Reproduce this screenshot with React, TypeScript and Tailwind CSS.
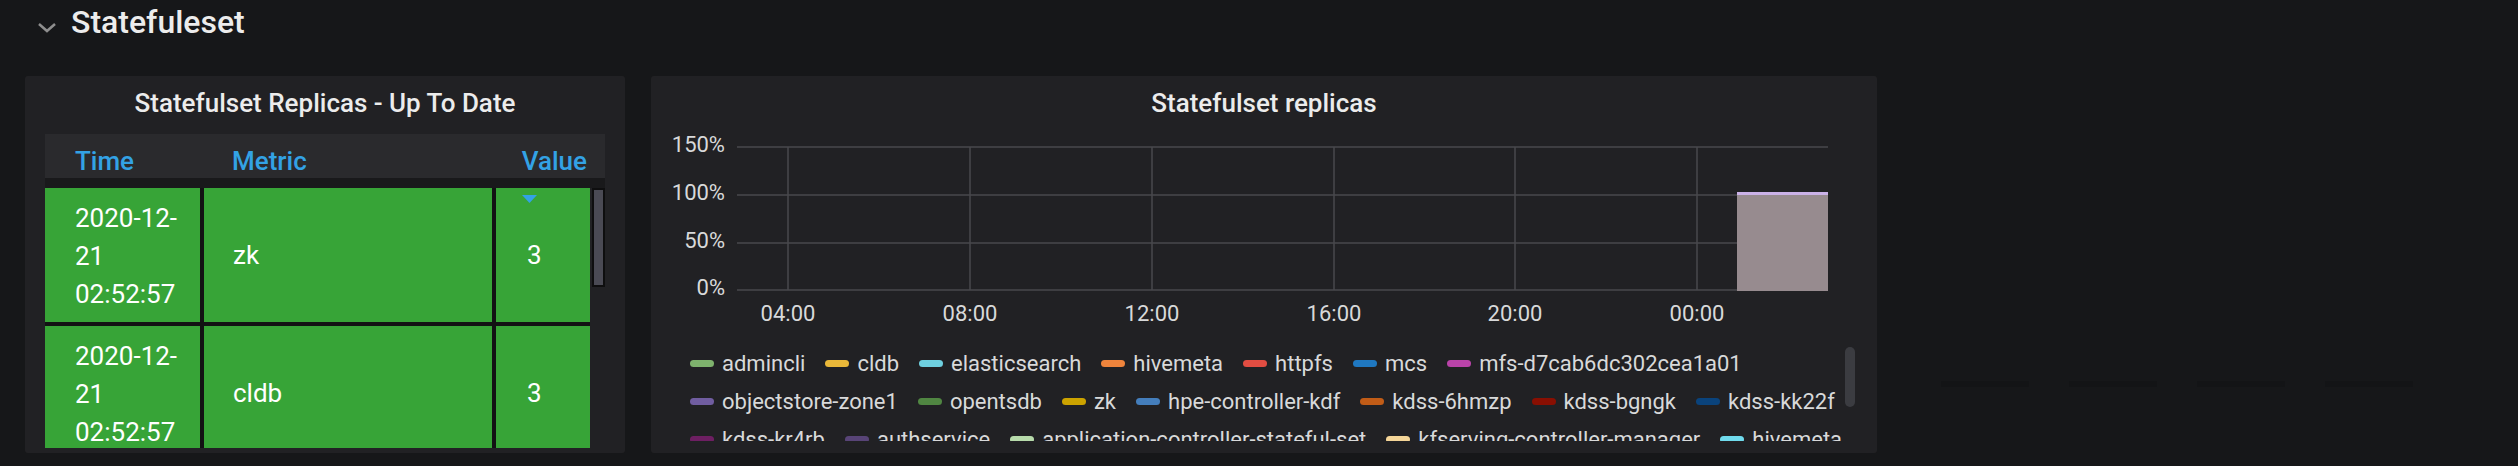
import React from "react";

const legendRows = [
  [
    { name: "admincli", color: "#7eb26d" },
    { name: "cldb", color: "#eab839" },
    { name: "elasticsearch", color: "#6ed0e0" },
    { name: "hivemeta", color: "#ef843c" },
    { name: "httpfs", color: "#e24d42" },
    { name: "mcs", color: "#1f78c1" },
    { name: "mfs-d7cab6dc302cea1a01", color: "#ba43a9" },
  ],
  [
    { name: "objectstore-zone1", color: "#705da0" },
    { name: "opentsdb", color: "#508642" },
    { name: "zk", color: "#cca300" },
    { name: "hpe-controller-kdf", color: "#447ebc" },
    { name: "kdss-6hmzp", color: "#c15c17" },
    { name: "kdss-bgngk", color: "#890f02" },
    { name: "kdss-kk22f", color: "#0a437c" },
  ],
  [
    { name: "kdss-kr4rb", color: "#6d1f62" },
    { name: "authservice", color: "#584477" },
    { name: "application-controller-stateful-set", color: "#b7dbab" },
    { name: "kfserving-controller-manager", color: "#f4d598" },
    { name: "hivemeta", color: "#70dbed" },
  ],
];

const rows = [
  { date: "2020-12-", day: "21", time: "02:52:57", metric: "zk", value: "3", sorted: true },
  { date: "2020-12-", day: "21", time: "02:52:57", metric: "cldb", value: "3", sorted: false },
];

const yTicks = [
  { label: "150%", y: 22 },
  { label: "100%", y: 70 },
  { label: "50%", y: 118 },
  { label: "0%", y: 165 },
];

const xTicks = [
  { label: "04:00", x: 137 },
  { label: "08:00", x: 319 },
  { label: "12:00", x: 501 },
  { label: "16:00", x: 683 },
  { label: "20:00", x: 864 },
  { label: "00:00", x: 1046 },
];

function ReplicaTable() {
  return (
    <div className="w-[600px] h-[377px] bg-[#212124] rounded-[3px] overflow-hidden flex flex-col">
      <div className="pt-[12px] text-center text-[26px] leading-[30px] font-medium text-[#ececec]">
        Statefulset Replicas - Up To Date
      </div>
      <div className="mt-[16px] mx-[20px] flex flex-col">
        {/* header */}
        <div className="flex h-[44px] bg-[#2a2a2d] pt-[12px] text-[26px] leading-[30px] font-medium text-[#33a2e5]">
          <div className="w-[159px] pl-[30px]">Time</div>
          <div className="w-[292px] pl-[28px]">Metric</div>
          <div className="w-[94px] text-right pr-[3px]">Value</div>
        </div>
        <div className="h-[10px] bg-[#19191b]" />
        {/* body */}
        <div className="flex h-[260px] overflow-hidden">
          <div className="w-[545px] flex flex-col gap-[4px] bg-[#121213]">
            {rows.map((r, i) => (
              <div key={i} className="flex gap-[4px] text-[26px] text-white shrink-0">
                <div className="w-[155px] bg-[#37a437] pt-[11px] pb-[9px] pl-[30px] leading-[38px]">
                  <div>{r.date}</div>
                  <div>{r.day}</div>
                  <div>{r.time}</div>
                </div>
                <div className="w-[288px] bg-[#37a437] flex items-center pl-[29px]">{r.metric}</div>
                <div className="relative w-[94px] bg-[#37a437] flex items-center pl-[31px]">
                  {r.sorted && (
                    <svg className="absolute top-[7px] left-[26px]" width="15" height="8" viewBox="0 0 15 8">
                      <polygon points="0,0 15,0 7.5,8" fill="#33a2e5" />
                    </svg>
                  )}
                  {r.value}
                </div>
              </div>
            ))}
          </div>
          <div className="ml-[2px] w-[13px]">
            <div className="h-[99px] bg-[#4a4a54] border-2 border-[#0e0e0f]" />
          </div>
        </div>
      </div>
    </div>
  );
}

function ReplicaGraph() {
  return (
    <div className="relative w-[1226px] h-[377px] bg-[#212124] rounded-[3px] overflow-hidden flex flex-col">
      <div className="pt-[12px] text-center text-[26px] leading-[30px] font-medium text-[#ececec]">
        Statefulset replicas
      </div>
      <svg className="mt-[7px] shrink-0" width="1226" height="205" viewBox="0 0 1226 205">
        {yTicks.map((t) => (
          <line key={t.label} x1="86" x2="1177" y1={t.y} y2={t.y} stroke="#48484c" strokeWidth="1.5" />
        ))}
        {xTicks.map((t) => (
          <line key={t.label} x1={t.x} x2={t.x} y1="22" y2="165" stroke="#48484c" strokeWidth="1.5" />
        ))}
        <rect x="1086" y="67" width="91" height="99" fill="#978b8f" />
        <rect x="1086" y="67" width="91" height="3" fill="#cbb2e8" />
        {yTicks.map((t) => (
          <text key={t.label} x="74" y={t.y + 5} textAnchor="end" fontFamily="Roboto, sans-serif" fontSize="22" fill="#d8d9da">
            {t.label}
          </text>
        ))}
        {xTicks.map((t) => (
          <text key={t.label} x={t.x} y="196" textAnchor="middle" fontFamily="Roboto, sans-serif" fontSize="22" fill="#d8d9da">
            {t.label}
          </text>
        ))}
      </svg>
      <div className="mt-[14px] pl-[39px] h-[97px] overflow-hidden flex flex-col text-[22px] text-[#d8d9da]">
        {legendRows.map((row, i) => (
          <div key={i} className="flex items-center h-[38px] shrink-0 gap-[20px] whitespace-nowrap">
            {row.map((item, j) => (
              <div key={j} className="flex items-center gap-[8px]">
                <span className="w-[24px] h-[7px] rounded-full" style={{ backgroundColor: item.color }} />
                <span>{item.name}</span>
              </div>
            ))}
          </div>
        ))}
      </div>
      <div className="absolute right-[22px] top-[271px] w-[10px] h-[60px] rounded-full bg-[#3b3c41]" />
    </div>
  );
}

export default function App() {
  return (
    <div className="w-[2518px] h-[466px] bg-[#161719] overflow-hidden font-['Roboto',sans-serif]">
      <div className="flex items-start pl-[37px] pt-[3px] h-[76px]">
        <svg className="mt-[19px]" width="20" height="11" viewBox="0 0 20 11">
          <polyline points="2,2 10,9 18,2" fill="none" stroke="#8e8e8e" strokeWidth="2.5" />
        </svg>
        <h1 className="ml-[14px] text-[32px] leading-[38px] font-medium text-[#ececec]">Statefuleset</h1>
      </div>
      <div className="flex items-start pl-[25px] gap-[26px]">
        <ReplicaTable />
        <ReplicaGraph />
        <div className="flex gap-[40px] ml-[38px] mt-[305px]">
          <div className="w-[88px] h-[6px] bg-[#131416]" />
          <div className="w-[88px] h-[6px] bg-[#131416]" />
          <div className="w-[88px] h-[6px] bg-[#131416]" />
          <div className="w-[88px] h-[6px] bg-[#131416]" />
        </div>
      </div>
    </div>
  );
}
